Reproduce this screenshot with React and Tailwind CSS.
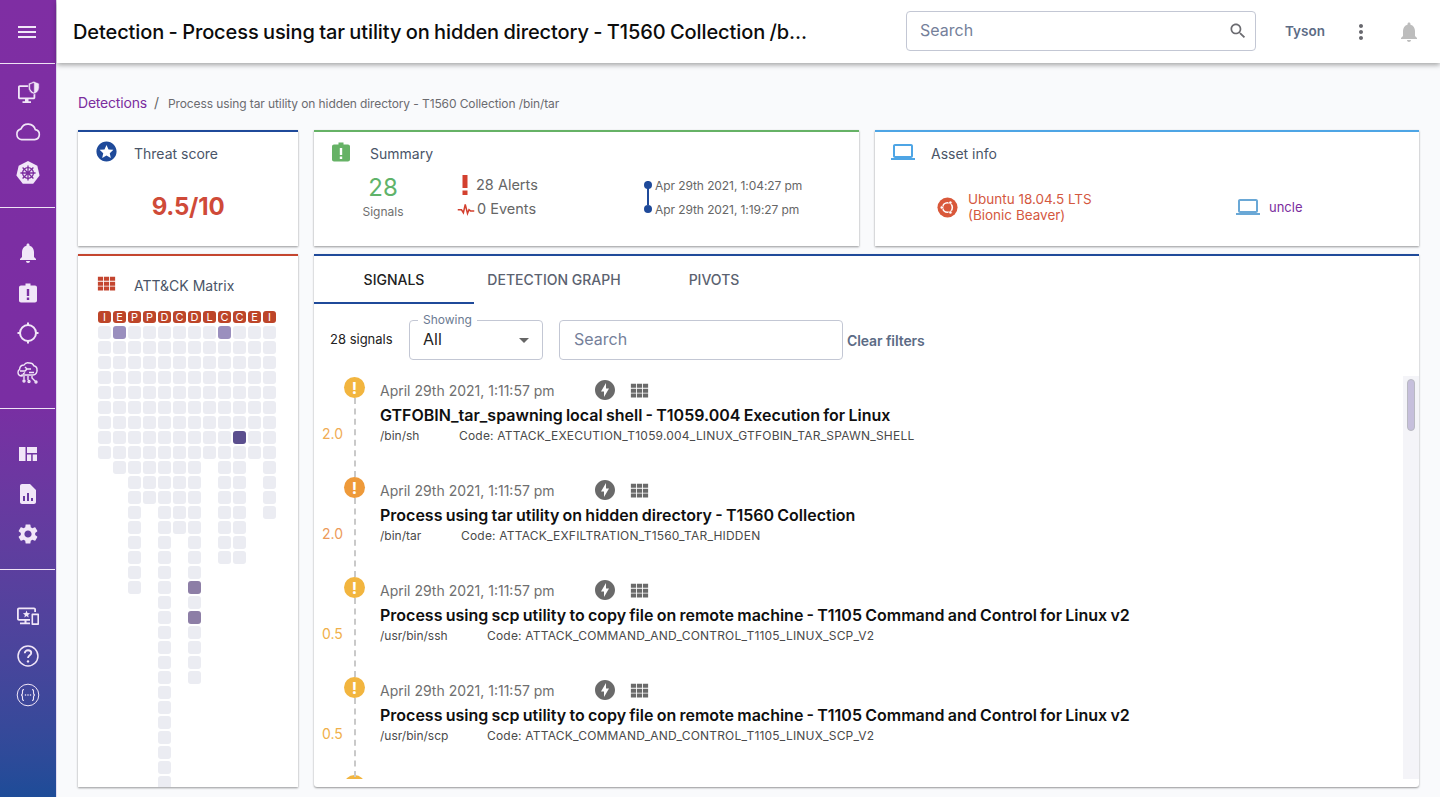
import React from "react";

const FONT = "font-['Inter','Liberation_Sans',sans-serif]";

function Svg({ size = 24, className = "", children, vb = "0 0 24 24" }) {
  return (
    <svg width={size} height={size} viewBox={vb} className={className} fill="currentColor">
      {children}
    </svg>
  );
}
const Menu = (p) => <Svg {...p}><path d="M3 18h18v-2H3v2zm0-5h18v-2H3v2zm0-7v2h18V6H3z" /></Svg>;
const Bell = (p) => <Svg {...p}><path d="M12 22c1.1 0 2-.9 2-2h-4c0 1.1.9 2 2 2zm6-6v-5c0-3.07-1.63-5.64-4.5-6.32V4c0-.83-.67-1.5-1.5-1.5s-1.5.67-1.5 1.5v.68C7.64 5.36 6 7.92 6 11v5l-2 2v1h16v-1l-2-2z" /></Svg>;
const Clip = (p) => <Svg {...p}><path fillRule="evenodd" d="M9.500 2.500h5V4.500H19c1.100 0 2 .9 2 2v13c0 1.100-.9 2-2 2H5c-1.100 0-2-.9-2-2v-13c0-1.100.9-2 2-2h4.500zM10.800 8v7h2.400V8zm0 8.500v2.500h2.400v-2.500z" /></Svg>;
const Grid = (p) => <Svg {...p}><path d="M3 5h5.400v4.200H3zM9.300 5h5.400v4.200H9.300zM15.600 5H21v4.200h-5.400zM3 10.100h5.400v4.200H3zM9.300 10.100h5.400v4.200H9.300zM15.600 10.100H21v4.200h-5.400zM3 15.200h5.400v4.200H3zM9.300 15.200h5.400v4.200H9.300zM15.600 15.200H21v4.200h-5.400z" /></Svg>;
const Laptop = (p) => <Svg {...p}><path d="M20 18c1.100 0 2-.9 2-2V6c0-1.100-.9-2-2-2H4c-1.100 0-2 .9-2 2v10c0 1.100.9 2 2 2H0v2h24v-2h-4zM4 6h16v10H4V6z" /></Svg>;
const Search = (p) => <Svg {...p}><path d="M15.500 14h-.79l-.28-.27C15.410 12.590 16 11.110 16 9.500 16 5.910 13.090 3 9.500 3S3 5.910 3 9.500 5.910 16 9.500 16c1.610 0 3.090-.59 4.230-1.570l.27.28v.79l5 4.990L20.490 19l-4.990-5zm-6 0C7.010 14 5 11.990 5 9.500S7.010 5 9.500 5 14 7.010 14 9.500 11.990 14 9.500 14z" /></Svg>;
const Dots = (p) => <Svg {...p}><path d="M12 8c1.100 0 2-.9 2-2s-.9-2-2-2-2 .9-2 2 .9 2 2 2zm0 2c-1.100 0-2 .9-2 2s.9 2 2 2 2-.9 2-2-.9-2-2-2zm0 6c-1.100 0-2 .9-2 2s.9 2 2 2 2-.9 2-2-.9-2-2-2z" /></Svg>;
const Bolt = (p) => <Svg {...p}><path d="M12 2C6.480 2 2 6.480 2 12s4.480 10 10 10 10-4.480 10-10S17.520 2 12 2zm-1 17v-5.500H8L13 5v5.500h3L11 19z" /></Svg>;
const Star = (p) => <Svg {...p}><path fillRule="evenodd" d="M12 1.500C6.200 1.500 1.500 6.200 1.500 12S6.200 22.500 12 22.500 22.500 17.800 22.500 12 17.800 1.500 12 1.500zm0 3.600 2.100 4.700 5.100.5-3.800 3.400 1.100 5-4.500-2.600-4.500 2.600 1.100-5-3.800-3.400 5.100-.5L12 5.100z" /></Svg>;
const Monitor = (p) => (
  <svg width={p.size} height={p.size} viewBox="0 0 24 24" className={p.className} fill="currentColor">
    <path fillRule="evenodd" d="M2 6c0-1 .8-1.800 1.800-1.800H14v1.800H3.800v10.500h13.700V13h1.800v3.500c0 1-.8 1.800-1.800 1.800H12.500v2h2.500V22H6.500v-1.700H9v-2H3.800C2.800 18.300 2 17.500 2 16.500z" />
    <path stroke="#7f2ea3" strokeWidth=".6" fillRule="evenodd" d="M17.800.3 12.400 2.400v4c0 3.100 2.300 5.900 5.400 6.700 3.100-.8 5.400-3.600 5.400-6.700v-4zm0 1.900v9c-2-.7-3.500-2.700-3.500-5V3.500z" />
  </svg>
);
const Cloud = (p) => (
  <svg width={p.size} height={p.size} viewBox="0 0 24 24" fill="none" stroke="currentColor" strokeWidth="1.400" className={p.className}>
    <path d="M6.500 18.500h11.200a4.300 4.300 0 0 0 .6-8.500A6.500 6.500 0 0 0 6 9.300a4.700 4.700 0 0 0 .5 9.200z" />
  </svg>
);
const Kube = (p) => (
  <svg width={p.size} height={p.size} viewBox="0 0 24 24" className={p.className}>
    <path fill="currentColor" d="M12 1 20.600 5.200 22.700 14.400 16.800 21.900H7.200L1.300 14.400 3.400 5.200z" />
    <g fill="none" stroke="#7b2d9e" strokeWidth="1.200">
      <circle cx="12" cy="12" r="5" />
      <path d="M12 5v14M5 12h14M7 7l10 10M17 7 7 17" />
    </g>
  </svg>
);
const Target = (p) => (
  <svg width={p.size} height={p.size} viewBox="0 0 24 24" fill="none" stroke="currentColor" strokeWidth="2" className={p.className}>
    <circle cx="12" cy="12" r="8" />
    <path d="M12 1.500v3.500M12 19v3.500M1.500 12H5M19 12h3.500" />
  </svg>
);
const Brain = (p) => (
  <svg width={p.size} height={p.size} viewBox="0 0 24 24" fill="none" stroke="currentColor" strokeWidth="1.400" className={p.className}>
    <path d="M6 16c-2.500 0-4-1.700-4-3.700 0-1.300.7-2.300 1.600-2.900C3.800 6.500 6 5 8 5c1-1.600 3-2.500 5-2 1.800-.2 4 .8 4.800 2.800 2 .5 3.400 2.300 3.200 4.400.3 2.400-1.500 4.800-4 4.800H6z" />
    <path d="M4 11h5l2-2h4M9 7l2 2M13 12.500h5M7 14l2-1.500M8 16v3.500M12 16v4M16 16v2l3 3" />
    <circle cx="8" cy="21" r="1" /><circle cx="13" cy="21.500" r="1" /><circle cx="20" cy="22" r="1" />
  </svg>
);
const Dash = (p) => <Svg {...p}><path d="M3 5h6.500v14H3zM11 5h10v6h-10zM11 12.500h4.200V19H11zM16.700 12.500H21V19h-4.300z" /></Svg>;
const Report = (p) => <Svg {...p}><path fillRule="evenodd" d="M14 2H6c-1.100 0-2 .9-2 2v16c0 1.100.9 2 2 2h12c1.100 0 2-.9 2-2V8l-6-6zM9 19H7v-5h2v5zm4 0h-2v-8h2v8zm4 0h-2v-3h2v3z" /></Svg>;
const Gear = (p) => <Svg {...p}><path d="M19.140 12.940c.04-.3.060-.61.060-.94 0-.32-.02-.64-.07-.94l2.030-1.580a.49.490 0 0 0 .12-.61l-1.920-3.320a.488.488 0 0 0-.59-.22l-2.390.96c-.5-.38-1.030-.7-1.620-.94l-.36-2.540a.484.484 0 0 0-.48-.41h-3.840c-.24 0-.43.17-.47.41l-.36 2.540c-.59.24-1.130.57-1.620.94l-2.390-.96c-.22-.08-.47 0-.59.22L2.740 8.870c-.12.21-.08.47.12.61l2.030 1.580c-.05.3-.09.63-.09.94s.02.64.07.94l-2.030 1.580a.49.490 0 0 0-.12.61l1.920 3.320c.12.22.37.29.59.22l2.390-.96c.5.38 1.030.7 1.620.94l.36 2.540c.05.24.24.41.48.41h3.840c.24 0 .44-.17.47-.41l.36-2.540c.59-.24 1.130-.56 1.620-.94l2.390.96c.22.08.47 0 .59-.22l1.920-3.320c.12-.22.07-.47-.12-.61l-2.010-1.580zM12 15.600c-1.980 0-3.600-1.620-3.600-3.600s1.620-3.600 3.600-3.600 3.600 1.620 3.600 3.600-1.620 3.600-3.600 3.600z" /></Svg>;
const Devices = (p) => (
  <Svg {...p}>
    <path fillRule="evenodd" d="M1 5.500C1 4.400 1.900 3.500 3 3.500h15c1.100 0 2 .9 2 2V8h-1.800V5.300H2.800V15H14v1.800h-3.500v1.700h3.500v1.800H4v-1.800h4.500v-1.700H3c-1.100 0-2-.9-2-2z" />
    <path d="m10.500 6.500 1 2.500 2.600.2-2 1.700.6 2.600-2.200-1.400-2.200 1.400.6-2.600-2-1.700 2.600-.2z" />
    <path fillRule="evenodd" d="M16.500 9.500h5.500c.6 0 1 .4 1 1v9.500c0 .6-.4 1-1 1h-5.500c-.6 0-1-.4-1-1v-9.500c0-.6.4-1 1-1zm.6 1.800v7.900h4.300v-7.900z" />
  </Svg>
);
const Help = (p) => (
  <svg width={p.size} height={p.size} viewBox="0 0 24 24" className={p.className}>
    <circle cx="12" cy="12" r="9.200" fill="none" stroke="currentColor" strokeWidth="1.400" />
    <path d="M9 9.500c0-1.700 1.300-2.800 3-2.800s3 1.100 3 2.600c0 2-3 2.200-3 4.600" fill="none" stroke="currentColor" strokeWidth="1.700" />
    <circle cx="12" cy="17" r="1.100" fill="currentColor" />
  </svg>
);
const Api = (p) => (
  <svg width={p.size} height={p.size} viewBox="0 0 24 24" className={p.className}>
    <circle cx="12" cy="12" r="10.800" fill="none" stroke="currentColor" strokeWidth="1" />
    <path d="M8 6.500c-1.800 0-1.500 1.500-1.500 3 0 1.500-.5 2.500-1.500 2.500 1 0 1.500 1 1.500 2.500s-.3 3 1.500 3M16 6.500c1.800 0 1.500 1.500 1.500 3 0 1.500.5 2.500 1.500 2.500-1 0-1.500 1-1.500 2.500s.3 3-1.500 3" fill="none" stroke="currentColor" strokeWidth="1.100" />
    <circle cx="9.500" cy="12" r=".8" fill="currentColor" /><circle cx="12" cy="12" r=".8" fill="currentColor" /><circle cx="14.500" cy="12" r=".8" fill="currentColor" />
  </svg>
);
const Pulse = (p) => (
  <svg width={p.size} height={p.size} viewBox="0 0 24 24" fill="none" stroke="currentColor" strokeWidth="2" className={p.className}>
    <path d="M1 13h5l2.500 4L11 6l3 12 2-5 2 1.500h5" />
  </svg>
);
const Ubuntu = (p) => (
  <svg width={p.size} height={p.size} viewBox="0 0 24 24" className={p.className}>
    <circle cx="12" cy="12" r="11.500" fill="#d9583a" />
    <circle cx="12" cy="12" r="5.500" fill="none" stroke="#fff" strokeWidth="1.800" />
    <circle cx="5.500" cy="12" r="1.900" fill="#fff" stroke="#d9583a" strokeWidth=".8" />
    <circle cx="15.300" cy="6.400" r="1.900" fill="#fff" stroke="#d9583a" strokeWidth=".8" />
    <circle cx="15.300" cy="17.600" r="1.900" fill="#fff" stroke="#d9583a" strokeWidth=".8" />
  </svg>
);
const Alert = () => (
  <svg width="10" height="22" viewBox="0 0 10 22" fill="currentColor">
    <path d="M2.500 1h5v13h-5zM2.500 16.500h5V21h-5z" />
  </svg>
);

function Divider() {
  return <div className="h-px mr-px bg-[#efe3f5] shrink-0" />;
}
function NavGroup({ children, className = "" }) {
  return <div className={`flex flex-col items-center gap-4 shrink-0 ${className}`}>{children}</div>;
}
function Sidebar() {
  return (
    <aside className="w-[57px] h-full shrink-0 flex flex-col bg-gradient-to-b from-[#7f2ea3] via-[#7a2ea3] to-[#1d4c98] border-r border-[#e3ddf0] text-[#f1e6f8]">
      <div className="h-[63px] flex items-center justify-center shrink-0 pr-[3px]"><Menu size={24} /></div>
      <Divider />
      <NavGroup className="h-[143px] pt-[17px]">
        <Monitor size={24} />
        <Cloud size={28} className="-my-[3px]" />
        <Kube size={26} className="-my-[1px] mt-[1px]" />
      </NavGroup>
      <Divider />
      <NavGroup className="h-[200px] pt-[33px]">
        <Bell size={24} />
        <Clip size={24} />
        <Target size={24} />
        <Brain size={24} className="-mt-[1px]" />
      </NavGroup>
      <Divider />
      <NavGroup className="h-[160px] pt-[33px]">
        <Dash size={24} />
        <Report size={24} />
        <Gear size={24} />
      </NavGroup>
      <Divider />
      <NavGroup className="pt-[34px]">
        <Devices size={24} />
        <Help size={26} className="-my-[1px]" />
        <Api size={24} className="-mt-[1px]" />
      </NavGroup>
    </aside>
  );
}

function Header() {
  return (
    <header className="h-[63px] shrink-0 bg-white shadow-[0_2px_5px_rgba(0,0,0,0.35)] flex items-center pl-4 relative z-10">
      <h1 className="w-[813px] shrink-0 text-[20px] font-medium text-[#0c0c0c] tracking-[-0.1px] [word-spacing:-0.8px] whitespace-nowrap">
        Detection - Process using tar utility on hidden directory - T1560 Collection /b...
      </h1>
      <div className="ml-[20px] w-[350px] h-[40px] shrink-0 border border-[#c3c7d4] rounded flex items-center justify-between pl-[13px] pr-[7px] mb-[2px]">
        <span className="text-[16px] text-[#75809a] pb-px">Search</span>
        <Search size={20} className="text-[#6b6b70]" />
      </div>
      <span className="ml-[29px] text-[13.5px] font-semibold text-[#5c6b85]">Tyson</span>
      <Dots size={24} className="ml-[24px] text-[#68686e]" />
      <Bell size={24} className="ml-[24px] text-[#bdbdbd]" />
    </header>
  );
}

function Card({ color, icon, title, className = "", headClass = "", children }) {
  return (
    <section className={`bg-white border-t-2 shadow-[0_1px_2px_rgba(0,0,0,0.4)] ${className}`} style={{ borderColor: color }}>
      <div className={`flex items-center h-[42px] pl-[16px] ${headClass}`}>
        <div className="w-[40px] shrink-0 flex mb-[3px]" style={{ color }}>{icon}</div>
        <span className="text-[14px] text-[#4a5568]">{title}</span>
      </div>
      {children}
    </section>
  );
}

const HEADERS = ["I", "E", "P", "P", "D", "C", "D", "L", "C", "C", "E", "I"];
const COUNTS = [9, 10, 18, 12, 31, 14, 24, 9, 16, 16, 9, 13];
const MARKS = { "1-0": "#9a8fbe", "8-0": "#9a8fbe", "9-7": "#5b4f8e", "6-17": "#8d7ea6", "6-19": "#8d7ea6" };

function Matrix() {
  return (
    <div className="flex gap-[2px] pl-[20px]">
      {HEADERS.map((h, i) => (
        <div key={i} className="flex flex-col gap-[2px] w-[13px]">
          <div className="h-[12px] mb-[1px] rounded-[3px] bg-[#bd4529] text-white text-[11px] leading-[12px] text-center">{h}</div>
          {Array.from({ length: COUNTS[i] }).map((_, r) => (
            <div
              key={r}
              className="h-[13px] rounded-[3px] bg-[#ebecf2]"
              style={MARKS[`${i}-${r}`] ? { backgroundColor: MARKS[`${i}-${r}`] } : undefined}
            />
          ))}
        </div>
      ))}
    </div>
  );
}

const SIGNALS = [
  { dot: "#f2b53f", score: "2.0", scoreColor: "#f0ac55", title: "GTFOBIN_tar_spawning local shell - T1059.004 Execution for Linux", path: "/bin/sh", code: "Code: ATTACK_EXECUTION_T1059.004_LINUX_GTFOBIN_TAR_SPAWN_SHELL", w: "w-[79px]" },
  { dot: "#ee9a3a", score: "2.0", scoreColor: "#ec9a5a", title: "Process using tar utility on hidden directory - T1560 Collection", path: "/bin/tar", code: "Code: ATTACK_EXFILTRATION_T1560_TAR_HIDDEN", w: "w-[81px]" },
  { dot: "#f2b53f", score: "0.5", scoreColor: "#f0b04a", title: "Process using scp utility to copy file on remote machine - T1105 Command and Control for Linux v2", path: "/usr/bin/ssh", code: "Code: ATTACK_COMMAND_AND_CONTROL_T1105_LINUX_SCP_V2", w: "w-[107px]" },
  { dot: "#f2b53f", score: "0.5", scoreColor: "#f0b04a", title: "Process using scp utility to copy file on remote machine - T1105 Command and Control for Linux v2", path: "/usr/bin/scp", code: "Code: ATTACK_COMMAND_AND_CONTROL_T1105_LINUX_SCP_V2", w: "w-[107px]" },
];

function Signal({ s }) {
  return (
    <div className="h-[100px] flex shrink-0">
      <div className="w-[66px] shrink-0 relative">
        <span className="absolute left-[8px] top-[46px] text-[14px]" style={{ color: s.scoreColor }}>{s.score}</span>
        <div className="absolute left-[30px] top-0 w-[21px] h-[21px] rounded-full flex items-center justify-center text-white font-bold text-[16px] z-10" style={{ backgroundColor: s.dot }}>!</div>
        <div className="absolute left-[40px] top-[21px] h-[79px] border-l-2 border-dashed border-[#c9c9c9]" />
      </div>
      <div className="pt-[2px]">
        <div className="flex items-center h-[22px]">
          <span className="text-[14px] text-[#6f6f6f] w-[213px] whitespace-nowrap">April 29th 2021, 1:11:57 pm</span>
          <Bolt size={24} className="text-[#6a6a6a]" />
          <Grid size={23} className="ml-[11px] text-[#6a6a6a]" />
        </div>
        <div className="text-[16px] font-semibold text-[#0f0f0f] leading-[24px] mt-[2px] whitespace-nowrap [word-spacing:-0.8px]">{s.title}</div>
        <div className="flex text-[12px] text-[#4a4a4a] leading-[18px] whitespace-nowrap">
          <span className={s.w}>{s.path}</span>
          <span className="tracking-[0.2px]">{s.code}</span>
        </div>
      </div>
    </div>
  );
}

export default function App() {
  return (
    <div className={`w-[1440px] h-[797px] flex overflow-hidden bg-[#f9fafc] ${FONT}`}>
      <Sidebar />
      <div className="flex-1 min-w-0 flex flex-col h-full">
        <Header />
        <main className="flex-1 min-h-0 pl-[21px] pr-[21px] flex flex-col pb-[10px]">
          <nav className="h-[67px] shrink-0 flex items-baseline pt-[29px] whitespace-nowrap">
            <span className="text-[14px] text-[#7b2d9e] tracking-[-0.2px]">Detections</span>
            <span className="ml-[7px] mr-[9px] text-[#666] text-[14px]">/</span>
            <span className="text-[12px] text-[#6b6b70] tracking-[-0.1px]">Process using tar utility on hidden directory - T1560 Collection /bin/tar</span>
          </nav>
          <div className="grid grid-cols-[220px_545px_544px] gap-x-4 gap-y-2 grid-rows-[116px_533px]">
            <Card color="#1f4a9a" title="Threat score" icon={<Star size={23} className="ml-[1px]" />}>
              <div className="text-center text-[24px] font-bold text-[#cf4a38] mt-[15px] tracking-[-0.2px]">9.5/10</div>
            </Card>
            <Card color="#66b266" title="Summary" icon={<Clip size={24} className="-ml-[1px]" />}>
              <div className="flex mt-0 pl-[39px]">
                <div className="w-[60px] flex flex-col items-center">
                  <span className="text-[24px] leading-[28px] text-[#5fb36a]">28</span>
                  <span className="text-[12px] leading-[20px] text-[#6f6f6f]">Signals</span>
                </div>
                <div className="ml-[44px] w-[190px] pt-px text-[14.5px] text-[#666] flex flex-col gap-[4px]">
                  <div className="flex items-center h-[20px] gap-[6px] pl-[3px]"><span className="text-[#d3402f]"><Alert /></span>28 Alerts</div>
                  <div className="flex items-center h-[20px] gap-[2px]"><Pulse size={18} className="text-[#d3402f]" />0 Events</div>
                </div>
                <div className="flex flex-col text-[12px] text-[#666] relative pl-[8px] tracking-[-0.08px]">
                  <div className="h-[24px] flex items-center">Apr 29th 2021, 1:04:27 pm</div>
                  <div className="h-[24px] flex items-center">Apr 29th 2021, 1:19:27 pm</div>
                  <span className="absolute left-[0px] top-[7px] w-[2px] h-[24px] bg-[#1f4a9a]" />
                  <span className="absolute left-[-3px] top-[7px] w-[8px] h-[8px] rounded-full bg-[#1f4a9a]" />
                  <span className="absolute left-[-3px] top-[31px] w-[8px] h-[8px] rounded-full bg-[#1f4a9a]" />
                </div>
              </div>
            </Card>
            <Card color="#4ea5e5" title="Asset info" icon={<Laptop size={24} />}>
              <div className="flex items-center pt-[17px] pl-[62px]">
                <Ubuntu size={21} />
                <div className="ml-[10px] w-[268px] text-[13.5px] leading-[16px] text-[#d4583f] whitespace-nowrap">Ubuntu 18.04.5 LTS<br />(Bionic Beaver)</div>
                <Laptop size={24} className="text-[#6aa8d6]" />
                <span className="ml-[9px] mt-[2px] text-[13px] text-[#7b2d9e]">uncle</span>
              </div>
            </Card>
            <Card color="#c4452f" title="ATT&CK Matrix" icon={<Grid size={23} className="ml-[1px]" />} headClass="mt-[8px]" className="overflow-hidden">
              <div className="h-[481px] overflow-hidden pt-[5px]"><Matrix /></div>
            </Card>
            <section className="col-span-2 bg-white border-t-2 border-[#1f4a9a] rounded-b-[3px] shadow-[0_1px_2px_rgba(0,0,0,0.4)] flex flex-col overflow-hidden">
              <div className="flex h-[48px] shrink-0">
                <div className="w-[160px] border-b-2 border-[#1f4a9a] flex items-center justify-center text-[14px] font-medium text-[#222]">SIGNALS</div>
                <div className="w-[160px] pb-[2px] flex items-center justify-center text-[14px] font-medium text-[#5b6270]">DETECTION GRAPH</div>
                <div className="w-[160px] pb-[2px] flex items-center justify-center text-[14px] font-medium text-[#5b6270]">PIVOTS</div>
              </div>
              <div className="flex items-center h-[72px] shrink-0 pl-[16px]">
                <span className="text-[13px] text-[#222] w-[79px]">28 signals</span>
                <div className="relative w-[134px] h-[40px] border border-[#c3c7d4] rounded flex items-center justify-between pl-[13px] pr-[13px]">
                  <span className="absolute left-[8px] top-[-9px] bg-white px-[5px] text-[12px] leading-[16px] text-[#6b7a92]">Showing</span>
                  <span className="text-[16px] text-[#222] pb-[2px]">All</span>
                  <span className="w-0 h-0 border-x-[5px] border-x-transparent border-t-[5px] border-t-[#666]" />
                </div>
                <div className="ml-[16px] w-[284px] h-[40px] border border-[#c3c7d4] rounded flex items-center pl-[14px] pb-[2px] text-[16px] text-[#75809a]">Search</div>
                <span className="ml-[4px] text-[14px] font-semibold text-[#5c6b85] tracking-[-0.1px]">Clear filters</span>
              </div>
              <div className="flex-1 min-h-0 flex pb-[8px]">
                <div className="flex-1 min-w-0 overflow-hidden flex flex-col pt-[1px]">
                  {SIGNALS.map((s, i) => <Signal key={i} s={s} />)}
                  <div className="shrink-0 ml-[30px] -mt-[2px] w-[21px] h-[21px] rounded-full bg-[#f2b53f]" />
                </div>
                <div className="w-[16px] shrink-0 bg-[#f4f4f8] pl-[4px] pt-[3px]">
                  <div className="w-[8px] h-[52px] rounded bg-[#c6bfdc] border border-[#b9b9c2]" />
                </div>
              </div>
            </section>
          </div>
        </main>
      </div>
    </div>
  );
}
